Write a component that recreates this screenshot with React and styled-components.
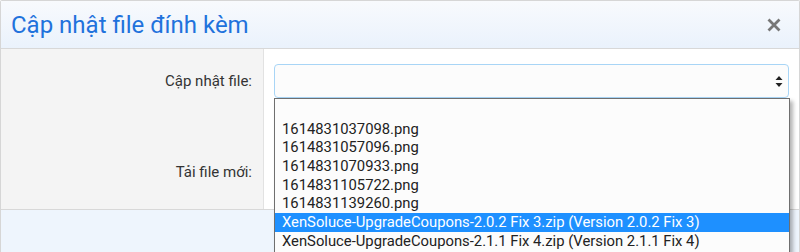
import React from 'react';
import styled, {createGlobalStyle} from "styled-components";

const GlobalStyle = createGlobalStyle`
    html, body {
        margin: 0;
        padding: 0;
        background: #fff;
        overflow: hidden;
        height: 252px;
        font-family: Roboto, "Noto Sans", "Liberation Sans", sans-serif;
    }
`

const files = [
    {name: "1614831037098.png"},
    {name: "1614831057096.png"},
    {name: "1614831070933.png"},
    {name: "1614831105722.png"},
    {name: "1614831139260.png"},
    {name: "XenSoluce-UpgradeCoupons-2.0.2 Fix 3.zip (Version 2.0.2 Fix 3)", active: true},
    {name: "XenSoluce-UpgradeCoupons-2.1.1 Fix 4.zip (Version 2.1.1 Fix 4)"},
]

function App() {
    return (
        <>
            <GlobalStyle/>
            <Dialog>
                <Header>
                    <Title>Cập nhật file đính kèm</Title>
                    <CloseButton aria-label="Close">
                        <svg width="16" height="16" viewBox="0 0 16 16">
                            <path d="M2.5 2.5 L13.5 13.5 M13.5 2.5 L2.5 13.5" stroke="#777" strokeWidth="2.8" strokeLinecap="butt"/>
                        </svg>
                    </CloseButton>
                </Header>
                <Body>
                    <Label>Cập nhật file:</Label>
                    <Cell>
                        <SelectWrap>
                            <SelectBox>
                                <Arrows>
                                    <svg width="8" height="11" viewBox="0 0 8 11">
                                        <path d="M4 0 L7.5 4 L0.5 4 Z M0.5 7 L7.5 7 L4 11 Z" fill="#222"/>
                                    </svg>
                                </Arrows>
                            </SelectBox>
                            <OptionList>
                                <Option/>
                                {files.map(({name, active}) => (
                                    <Option key={name} active={active}>{name}</Option>
                                ))}
                            </OptionList>
                        </SelectWrap>
                    </Cell>
                    <Label last>Tải file mới:</Label>
                    <Cell last>
                        <FileInput type="file"/>
                    </Cell>
                </Body>
                <Footer/>
            </Dialog>
        </>
    );
}

const Dialog = styled.div`
    width: 800px;
    height: 252px;
    overflow: hidden;
    box-sizing: border-box;
    border: 1px solid #d6d6d6;
    border-bottom: none;
    border-radius: 2px 2px 0 0;
`
const Header = styled.div`
    height: 47px;
    display: flex;
    align-items: center;
    justify-content: space-between;
    padding: 0 17px 0 10px;
    background: linear-gradient(to bottom, #f8fafd, #eaf2fc);
    border-bottom: 1px solid #d8d8d8;
`
const Title = styled.h2`
    margin: 0;
    font-size: 24px;
    font-weight: 400;
    color: #1f72dc;
`
const CloseButton = styled.button`
    border: none;
    background: none;
    padding: 0;
    width: 16px;
    height: 16px;
    display: flex;
    cursor: pointer;
`
const Body = styled.div`
    display: grid;
    grid-template-columns: 263px 1fr;
    grid-template-rows: 64px 96px;
`
const Label = styled.label`
    box-sizing: border-box;
    background: #f4f4f4;
    border-right: 1px solid #e2e2e2;
    text-align: right;
    font-size: 15px;
    line-height: 34px;
    color: #333;
    padding: ${p => p.last ? "42px 11px 0 0" : "15px 11px 0 0"};
`
const Cell = styled.div`
    padding: ${p => p.last ? "15px 10px" : "15px 10px 0 10px"};
    position: relative;
    z-index: ${p => p.last ? 0 : 2};
`
const SelectWrap = styled.div`
    position: relative;
`
const SelectBox = styled.div`
    box-sizing: border-box;
    height: 34px;
    border: 1px solid #a8d5f6;
    border-radius: 4px;
    background: #fcfcfc;
    display: flex;
    align-items: center;
    justify-content: flex-end;
    padding-right: 5px;
`
const Arrows = styled.span`
    display: flex;
    margin-top: 1px;
`
const OptionList = styled.ul`
    position: absolute;
    top: 34px;
    left: 0;
    right: -1px;
    margin: 0;
    padding: 1px 0 0;
    list-style: none;
    background: #fcfcfc;
    border: 1px solid #6f6f6f;
    border-bottom: none;
    box-shadow: 3px 3px 4px rgba(0, 0, 0, 0.3);
    height: 153px;
    overflow: hidden;
`
const Option = styled.li`
    height: 18.67px;
    line-height: 18.67px;
    padding-left: 7px;
    font-size: 14.8px;
    color: ${p => p.active ? "#fff" : "#222"};
    background: ${p => p.active ? "#1e90ff" : "transparent"};
    white-space: nowrap;
    &:first-child {
        height: 19.67px;
    }
`
const FileInput = styled.input`
    font-size: 14px;
`
const Footer = styled.div`
    height: 44px;
    background: #eef5fd;
    border-top: 1px solid #d8d8d8;
`

export default App;
